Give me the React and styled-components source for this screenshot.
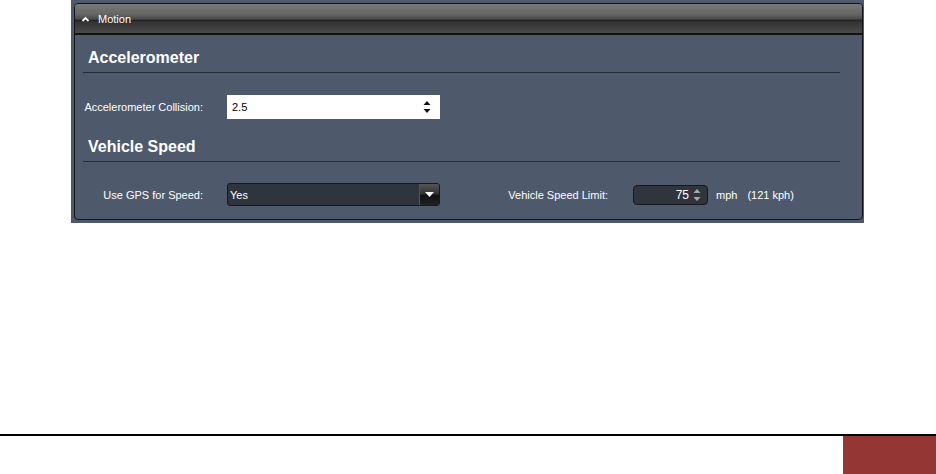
import React from 'react';
import styled, { createGlobalStyle } from 'styled-components';

const Global = createGlobalStyle`
    html, body {
        margin: 0;
        padding: 0;
        background: #fff;
    }
    body {
        font-family: "Liberation Sans", Arial, sans-serif;
    }
`;

const Page = styled.div`
    width: 936px;
    height: 474px;
    display: flex;
    flex-direction: column;
    overflow: hidden;
`;

const Frame = styled.div`
    margin-left: 71px;
    width: 793px;
    height: 223px;
    box-sizing: border-box;
    background: #4e596c;
    padding: 3px 1px 3px 3px;
`;

const Panel = styled.div`
    height: 100%;
    box-sizing: border-box;
    border: 1px solid #111418;
    border-radius: 4px;
    overflow: hidden;
    display: flex;
    flex-direction: column;
`;

const Header = styled.div`
    height: 29px;
    border-bottom: 2px solid #121212;
    background: linear-gradient(
        to bottom,
        #787878 0%,
        #666 35%,
        #4a4a4a 52%,
        #222 56%,
        #333 62%,
        #4a4a4a 100%
    );
    display: flex;
    align-items: center;
    padding-left: 6px;
    gap: 8px;
    color: #fff;
    font-size: 11px;
`;

const Body = styled.div`
    padding: 9px 22px 0 8px;
`;

const SectionTitle = styled.h2`
    margin: 0;
    padding: 5px 0 5px 5px;
    font-size: 16px;
    font-weight: bold;
    color: #fff;
    border-bottom: 1px solid #262c38;
`;

const Row = styled.div`
    display: flex;
    align-items: center;
    padding: ${p => p.pad || '22px 0 16px'};
`;

const Label = styled.label`
    width: ${p => p.w || 119}px;
    margin-left: ${p => p.ml || 1}px;
    text-align: right;
    color: #fff;
    font-size: 11px;
    margin-right: ${p => p.mr || 24}px;
`;

const WhiteInput = styled.div`
    width: 213px;
    height: 24px;
    box-sizing: border-box;
    background: #fff;
    display: flex;
    align-items: center;
    justify-content: space-between;
    padding: 0 9px 0 5px;
    font-size: 11px;
    color: #000;
`;

const Select = styled.div`
    width: 213px;
    height: 23px;
    box-sizing: border-box;
    border: 1px solid #15181d;
    border-radius: 3px;
    background: #2f343d;
    display: flex;
    overflow: hidden;
    color: #fff;
    font-size: 11px;
`;

const SelectText = styled.div`
    flex: 1;
    display: flex;
    align-items: center;
    padding-left: 2px;
`;

const SelectButton = styled.div`
    width: 19px;
    border-left: 1px solid #555;
    background: linear-gradient(to bottom, #555 0%, #333 45%, #111 55%, #222 100%);
    display: flex;
    align-items: center;
    justify-content: center;
`;

const NumberBox = styled.div`
    width: 75px;
    height: 20px;
    box-sizing: border-box;
    border: 1px solid #15181d;
    border-radius: 4px;
    background: #2f343d;
    display: flex;
    align-items: center;
    justify-content: flex-end;
    gap: 4px;
    padding-right: 6px;
    color: #fff;
    font-size: 12px;
`;

const Unit = styled.span`
    color: #fff;
    font-size: 11px;
    margin-left: ${p => p.ml || 0}px;
`;

const Footer = styled.div`
    margin-top: auto;
    height: 38px;
    border-top: 2px solid #000;
    display: flex;
    justify-content: flex-end;
`;

const RedBlock = styled.div`
    width: 93px;
    background: #943634;
`;

const Caret = () => (
    <svg width="9" height="6" viewBox="0 0 9 6">
        <path d="M1.5 5 L4.5 2 L7.5 5" fill="none" stroke="#fff" strokeWidth="1.8" />
    </svg>
);

const Spinner = ({ color }) => (
    <svg width="8" height="16" viewBox="0 0 8 16">
        <path d="M0.5 6 L4 2 L7.5 6 Z" fill={color} />
        <path d="M0.5 10 L4 14 L7.5 10 Z" fill={color} />
    </svg>
);

const App = () => (
    <Page>
        <Global />
        <Frame>
            <Panel>
                <Header>
                    <Caret />
                    <span>Motion</span>
                </Header>
                <Body>
                    <SectionTitle>Accelerometer</SectionTitle>
                    <Row pad="22px 0 14px">
                        <Label>Accelerometer Collision:</Label>
                        <WhiteInput>
                            <span>2.5</span>
                            <Spinner color="#111" />
                        </WhiteInput>
                    </Row>
                    <SectionTitle>Vehicle Speed</SectionTitle>
                    <Row pad="21px 0 0">
                        <Label>Use GPS for Speed:</Label>
                        <Select>
                            <SelectText>Yes</SelectText>
                            <SelectButton>
                                <svg width="9" height="5" viewBox="0 0 9 5">
                                    <path d="M0 0 L9 0 L4.5 5 Z" fill="#fff" />
                                </svg>
                            </SelectButton>
                        </Select>
                        <Label w={120} ml={48} mr={25}>Vehicle Speed Limit:</Label>
                        <NumberBox>
                            <span>75</span>
                            <Spinner color="#aaa" />
                        </NumberBox>
                        <Unit ml={8}>mph</Unit>
                        <Unit ml={10}>(121 kph)</Unit>
                    </Row>
                </Body>
            </Panel>
        </Frame>
        <Footer>
            <RedBlock />
        </Footer>
    </Page>
);

export default App;
